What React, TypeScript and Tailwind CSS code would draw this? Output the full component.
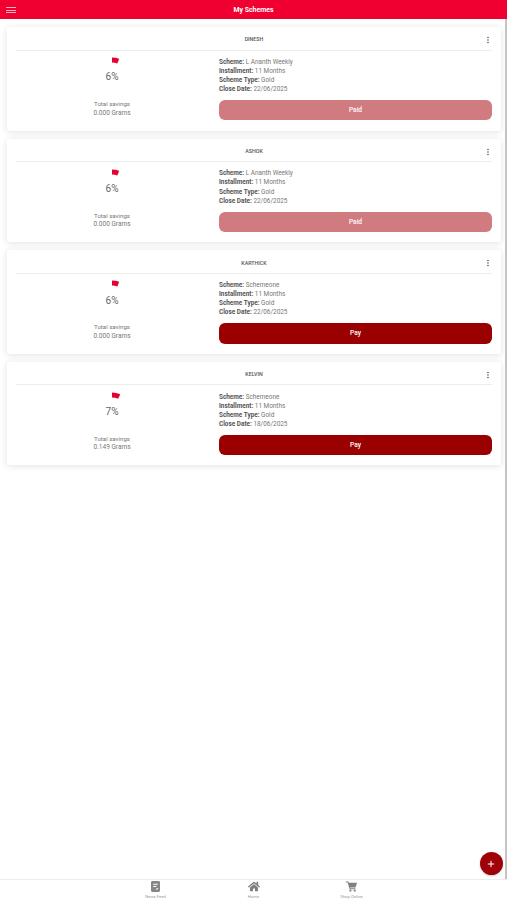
import { FaHome } from "react-icons/fa";
import { MdMoreVert } from "react-icons/md";

const schemes = [
    { name: "DINESH", scheme: "L Ananth Weekly", percent: 6, savings: "0.000", closeDate: "22/06/2025", paid: true },
    { name: "ASHOK", scheme: "L Ananth Weekly", percent: 6, savings: "0.000", closeDate: "22/06/2025", paid: true },
    { name: "KARTHICK", scheme: "Schemeone", percent: 6, savings: "0.000", closeDate: "22/06/2025", paid: false },
    { name: "KELVIN", scheme: "Schemeone", percent: 7, savings: "0.149", closeDate: "18/06/2025", paid: false },
];

type Scheme = (typeof schemes)[number];

function Progress({ percent }: { percent: number }) {
    return (
        <div className="grid h-[40px] w-[40px] place-items-center">
            <svg viewBox="0 0 40 40" className="col-start-1 row-start-1 h-[40px] w-[40px] -rotate-90">
                <circle
                    cx="20"
                    cy="20"
                    r="17"
                    fill="none"
                    stroke="#e60030"
                    strokeWidth="5"
                    pathLength="100"
                    strokeDasharray={`${percent} 100`}
                />
            </svg>
            <span className="col-start-1 row-start-1 pt-[1px] text-[10px] leading-none text-[#666]">{percent}%</span>
        </div>
    );
}

function Detail({ label, value }: { label: string; value: string }) {
    return (
        <p className="whitespace-nowrap">
            <span className="font-bold text-[#555]">{label}:</span> {value}
        </p>
    );
}

function SchemeCard({ item }: { item: Scheme }) {
    return (
        <div className="h-[103.6px] rounded-[3px] bg-white px-[9px] shadow-[0_1px_7px_rgba(0,0,0,0.12)]">
            <div className="grid h-[23.6px] grid-cols-[1fr_auto_1fr] items-center border-b border-[#ececec] pt-[3px]">
                <span />
                <h2 className="pt-[1px] text-[5.3px] font-medium text-[#555]">{item.name}</h2>
                <MdMoreVert className="mr-[-1px] mt-[1px] h-[10px] w-[10px] justify-self-end text-[#555]" />
            </div>
            <div className="flex">
                <div className="flex w-[192px] flex-col items-center pt-[6.4px] text-[6.5px] leading-[9px] text-[#777]">
                    <Progress percent={item.percent} />
                    <p className="mt-[2px] text-[6.1px]">Total savings</p>
                    <p className="mt-[0.6px]">{item.savings} Grams</p>
                </div>
                <div className="ml-[11px] flex-1 pt-[7.2px] text-[6.4px] leading-[9.1px] text-[#777]">
                    <Detail label="Scheme" value={item.scheme} />
                    <Detail label="Installment" value="11 Months" />
                    <Detail label="Scheme Type" value="Gold" />
                    <Detail label="Close Date" value={item.closeDate} />
                    <button
                        className={`mt-[5.8px] block h-[20.4px] w-full rounded-[6px] pt-[1px] text-[6.6px] font-medium text-white ${
                            item.paid ? "bg-[#cf7b80]" : "bg-[#9b0000]"
                        }`}
                    >
                        {item.paid ? "Paid" : "Pay"}
                    </button>
                </div>
            </div>
        </div>
    );
}

function FeedIcon() {
    return (
        <svg viewBox="0 0 10 12" className="h-[11px] w-[9px]">
            <path
                fillRule="evenodd"
                fill="currentColor"
                d="M1.5 0h7A1.5 1.5 0 0 1 10 1.5v9A1.5 1.5 0 0 1 8.5 12h-7A1.5 1.5 0 0 1 0 10.5v-9A1.5 1.5 0 0 1 1.5 0zM2.5 3v1h5V3zM2.5 5.5v1h3.5v-1zM6 8v2.5L8.5 8z"
            />
        </svg>
    );
}

function CartIcon() {
    return (
        <svg viewBox="0 0 11 11" className="h-[11px] w-[11px]" fill="currentColor">
            <path d="M0 .5h2.3l.5 1.2H11L9.5 6.5H4.2l.2.8h5v1H3.6L1.6 1.4H0z" />
            <circle cx="4.4" cy="9.6" r="1.1" />
            <circle cx="8.7" cy="9.6" r="1.1" />
        </svg>
    );
}

export default function App() {
    return (
        <div className="relative flex h-[900px] w-[507px] flex-col overflow-hidden bg-white font-[Roboto,sans-serif]">
            <header className="grid h-[18.6px] shrink-0 grid-cols-[1fr_auto_1fr] items-center bg-[#f00030] px-[6px] text-white">
                <button aria-label="Menu" className="flex w-[10px] flex-col gap-[1.4px] pt-[2px]">
                    <span className="h-[1px] w-full bg-white/70" />
                    <span className="h-[1px] w-full bg-white/70" />
                    <span className="h-[1px] w-full bg-white/70" />
                </button>
                <h1 className="pt-[1px] text-[6.9px] font-bold">My Schemes</h1>
            </header>
            <main className="flex flex-1 border-b border-[#ececec]">
                <div className="flex flex-1 flex-col gap-[8px] pl-[7px] pr-[4px] pt-[8.4px]">
                    {schemes.map((item) => (
                        <SchemeCard key={item.name} item={item} />
                    ))}
                </div>
                <div className="w-[2px] bg-[#c4c4c4]" />
            </main>
            <button aria-label="Add" className="absolute left-[479.5px] top-[852px] grid h-[23px] w-[23px] place-items-center rounded-full bg-[#a00008] text-white shadow-[0_1px_2px_rgba(0,0,0,0.2)]">
                <svg viewBox="0 0 8 8" className="h-[8px] w-[8px]" stroke="currentColor" strokeWidth="1">
                    <path d="M4 .8v6.4M.8 4h6.4" />
                </svg>
            </button>
            <nav className="flex h-[20.5px] shrink-0 justify-center text-[4.2px] leading-[5px] text-[#999]">
                <div className="flex w-[98px] flex-col items-center pt-[1.5px]">
                    <span className="text-[#858585]"><FeedIcon /></span>
                    <span className="mt-[2px]">News Feed</span>
                </div>
                <div className="flex w-[98px] flex-col items-center pt-[1.5px]">
                    <FaHome className="h-[11px] w-[12px] text-[#808080]" />
                    <span className="mt-[2px]">Home</span>
                </div>
                <div className="flex w-[98px] flex-col items-center pt-[1.5px]">
                    <span className="text-[#808080]"><CartIcon /></span>
                    <span className="mt-[2px]">Shop Online</span>
                </div>
            </nav>
        </div>
    );
}
